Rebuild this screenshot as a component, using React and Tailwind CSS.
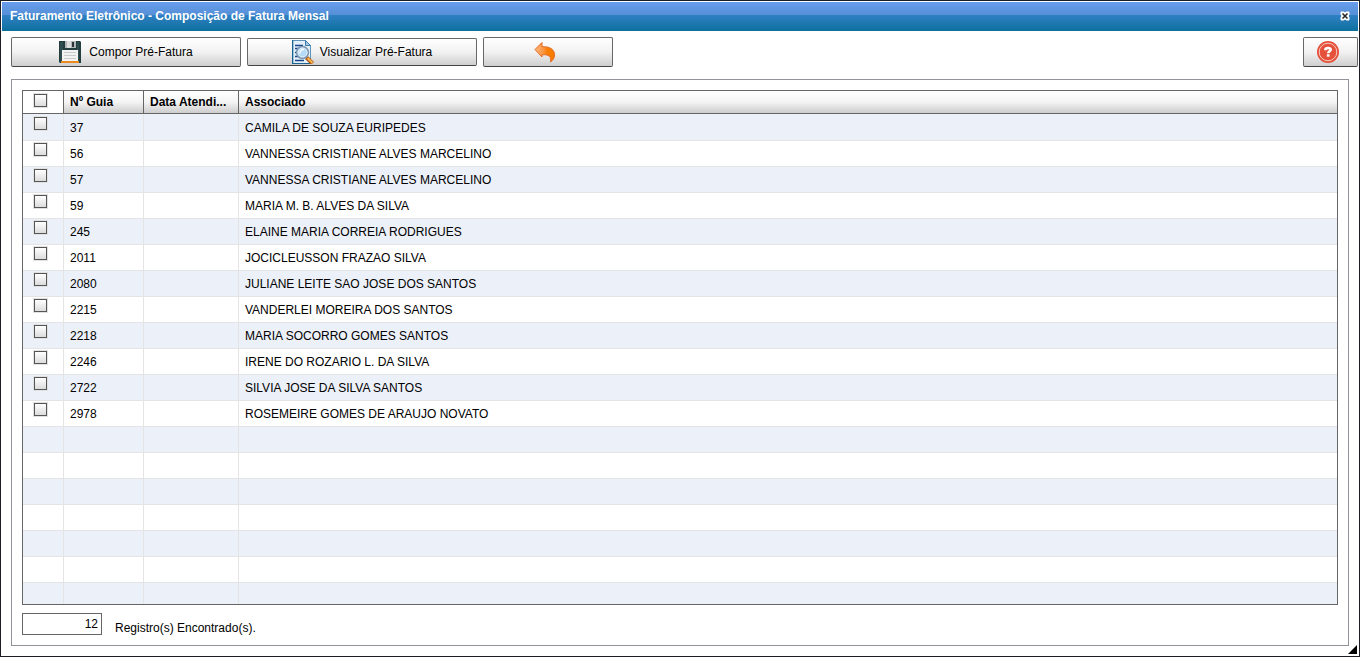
const guias = [
  ["37", "CAMILA DE SOUZA EURIPEDES"],
  ["56", "VANNESSA CRISTIANE ALVES MARCELINO"],
  ["57", "VANNESSA CRISTIANE ALVES MARCELINO"],
  ["59", "MARIA M. B. ALVES DA SILVA"],
  ["245", "ELAINE MARIA CORREIA RODRIGUES"],
  ["2011", "JOCICLEUSSON FRAZAO SILVA"],
  ["2080", "JULIANE LEITE SAO JOSE DOS SANTOS"],
  ["2215", "VANDERLEI MOREIRA DOS SANTOS"],
  ["2218", "MARIA SOCORRO GOMES SANTOS"],
  ["2246", "IRENE DO ROZARIO L. DA SILVA"],
  ["2722", "SILVIA JOSE DA SILVA SANTOS"],
  ["2978", "ROSEMEIRE GOMES DE ARAUJO NOVATO"],
];
const emptyRows = [0, 1, 2, 3, 4, 5, 6];

function SaveIcon() {
  return (
    <svg width="22" height="22" viewBox="0 0 22 22" aria-hidden="true">
      <path d="M0 0h21l1 1v21H1l-1-1z" fill="#243e40" />
      <path d="M1 1h3v8h14V1h2v20H1z" fill="#2f4d4e" />
      <rect x="6" y="0" width="11" height="7" fill="#b4b7b9" />
      <rect x="8" y="0" width="4" height="7" fill="#dcdddf" />
      <rect x="13" y="1" width="2" height="5" fill="#2c3334" />
      <rect x="3" y="9" width="16" height="11" fill="#f3f3f3" />
      <path d="M5 11.5h12M5 14.5h12M5 17.5h12" stroke="#c9cbcd" />
      <rect x="2" y="20" width="18" height="2" fill="#ea8a1f" />
    </svg>
  );
}

function PreviewIcon() {
  return (
    <svg width="22" height="24" viewBox="0 0 22 24" aria-hidden="true">
      <path d="M1 .5h12.5l5 5v18H1z" fill="#e3f0f9" stroke="#5b93bb" />
      <path d="M.5 0v24M.5 23.500h18" stroke="#1b6390" />
      <path d="M13.5.5v5h5z" fill="#a9cde6" stroke="#3b79a8" />
      <path d="M3 5.5h8M3 8.500h5M3 12.5h3M3 16.5h4M3 20.5h9" stroke="#17448c" strokeWidth="1.4" />
      <path d="m14.500 17.500 6 6" stroke="#a85414" strokeWidth="4" />
      <path d="m15.5 18 5 5" stroke="#ffb64c" strokeWidth="2" />
      <circle cx="10.500" cy="12.5" r="5.900" fill="#b4dafa" stroke="#7f95ae" strokeWidth="1.6" />
      <circle cx="10.500" cy="12.5" r="4.500" fill="none" stroke="#e3f3ff" />
      <path d="M8 13.5a3.5 3.5 0 0 1 4-4" fill="none" stroke="#fff" strokeWidth="1.4" />
    </svg>
  );
}

function BackIcon() {
  return (
    <svg width="22" height="22" viewBox="0 0 22 22" aria-hidden="true">
      <defs>
        <linearGradient id="arrow" x1="0" x2="1">
          <stop offset="0" stopColor="#ffb87a" />
          <stop offset=".45" stopColor="#fb9440" />
          <stop offset=".6" stopColor="#f97f08" />
          <stop offset="1" stopColor="#f57a00" />
        </linearGradient>
      </defs>
      <path
        d="M1 8.500 8 1.500v4.200c7.500-.4 12.500 2.600 12.500 8 0 3-1.200 5.300-4 7.300.5-2.500.3-4.500-1.200-5.800-1.500-1.400-3.800-1.600-7.300-1.400V16z"
        fill="url(#arrow)"
        stroke="#e2691f"
        strokeWidth="1"
        strokeLinejoin="round"
      />
    </svg>
  );
}

function HelpIcon() {
  return (
    <svg width="22" height="22" viewBox="0 0 22 22" aria-hidden="true">
      <circle cx="11" cy="11" r="11" fill="#e5513a" />
      <circle cx="11" cy="11" r="8.800" fill="none" stroke="#f8c9c0" strokeWidth="1" />
      <path d="M8.400 9.200V8.700c0-1.100 1-1.700 2.600-1.700s2.700.6 2.700 1.800c0 1.500-2.500 1.500-2.500 3.400" fill="none" stroke="#fff" strokeWidth="2.600" />
      <rect x="9.800" y="13.300" width="2.800" height="2.400" fill="#fff" />
    </svg>
  );
}

const buttonStyle =
  "flex items-center justify-center rounded-[2px] border border-[#686868] border-b-[#444] bg-linear-to-b from-white via-[#f2f2f2] to-[#cfcfcf]";

function Check({ label }) {
  return (
    <input
      type="checkbox"
      aria-label={label}
      className="block size-[13px] appearance-none border border-[#555] bg-linear-to-b from-white to-[#dcdcdc] shadow-[0_0_0_1px_#e2e2e2] checked:bg-[#555]"
    />
  );
}

export default function App() {
  return (
    <div className="relative flex min-h-screen flex-col border border-[#1b1d27] bg-white font-['Liberation_Sans',Arial,sans-serif] text-[12px] leading-4 text-black">
      <header className="mt-px mr-px ml-px flex h-[29px] shrink-0 items-center justify-between bg-[linear-gradient(to_bottom,#689ced_0%,#5590d6_45%,#3080c4_46%,#0d6f9c_100%)] pr-2 pb-[2px] pl-2">
        <h1 className="font-bold text-white">Faturamento Eletrônico - Composição de Fatura Mensal</h1>
        <button type="button" aria-label="Fechar">
          <svg width="10" height="10" viewBox="0 0 10 10">
            <path d="M1 1h2.500L5 2l1.500-1H9v2.500L8 5l1 1.500V9H6.500L5 8 3.500 9H1V6.500L2 5 1 3.500z" fill="#fff" stroke="#fff" />
            <path d="m2.500 2.500 5 5m0-5-5 5" stroke="#222" strokeWidth="1.500" />
          </svg>
        </button>
      </header>

      <div className="mt-[6px] mr-px ml-[10px] flex items-center gap-[6px]">
        <button type="button" className={`${buttonStyle} h-[30px] w-[230px] gap-2`}>
          <SaveIcon />
          <span>Compor Pré-Fatura</span>
        </button>
        <button type="button" className={`${buttonStyle} h-[28px] w-[230px] gap-[6px]`}>
          <PreviewIcon />
          <span>Visualizar Pré-Fatura</span>
        </button>
        <button type="button" aria-label="Voltar" className={`${buttonStyle} h-[30px] w-[130px] pr-[6px]`}>
          <BackIcon />
        </button>
        <button type="button" aria-label="Ajuda" className={`${buttonStyle} ml-auto h-[30px] w-[55px] pr-[6px]`}>
          <HelpIcon />
        </button>
      </div>

      <main className="mt-3 mr-[10px] mb-[10px] ml-[10px] flex grow flex-col border border-[#92929b] p-[10px] pb-2">
        <div className="border border-[#666]">
          <table className="w-full table-fixed border-separate border-spacing-0 text-left">
            <colgroup>
              <col className="w-[41px]" />
              <col className="w-[80px]" />
              <col className="w-[95px]" />
              <col />
            </colgroup>
            <thead>
              <tr className="h-[23px] [&>th]:border-b [&>th]:border-[#666] [&>th]:py-0 [&>th+th]:bg-linear-to-b [&>th+th]:from-white [&>th+th]:via-[#f4f4f4] [&>th+th]:to-[#cdcdcd] [&>th+th]:px-[6px]">
                <th className="border-r align-top">
                  <div className="pt-[3px] pl-[11px]"><Check label="Selecionar todos" /></div>
                </th>
                <th className="border-r">Nº Guia</th>
                <th className="border-r whitespace-nowrap">Data Atendi...</th>
                <th>Associado</th>
              </tr>
            </thead>
            <tbody className="[&_td]:border-t [&_td]:border-[#e4e4e4] [&_td]:p-0 [&_tr:first-child>td]:border-t-transparent [&_tr:nth-child(odd)]:bg-[#ecf0f8]">
              {guias.map(([guia, nome]) => (
                <tr key={guia} className="h-[26px]">
                  <td className="border-r align-top">
                    <div className="pt-[2px] pl-[11px]"><Check label={`Selecionar guia ${guia}`} /></div>
                  </td>
                  <td className="border-r"><div className="px-[6px]">{guia}</div></td>
                  <td className="border-r" />
                  <td><div className="px-[6px]">{nome}</div></td>
                </tr>
              ))}
              {emptyRows.map((n) => (
                <tr key={n} className="h-[26px] last:h-[22px]">
                  <td className="border-r" />
                  <td className="border-r" />
                  <td className="border-r" />
                  <td />
                </tr>
              ))}
            </tbody>
          </table>
        </div>
        <div className="mt-2 flex items-start gap-[13px]">
          <input
            id="total"
            type="text"
            readOnly
            defaultValue="12"
            className="h-[22px] w-[80px] border border-[#666] bg-white px-[3px] text-right"
          />
          <label htmlFor="total" className="pt-[7px]">Registro(s) Encontrado(s).</label>
        </div>
      </main>
      <svg className="absolute right-[2px] bottom-[2px]" width="9" height="9" viewBox="0 0 9 9" aria-hidden="true">
        <path d="M9 0v9H0z" fill="#000" />
      </svg>
    </div>
  );
}
